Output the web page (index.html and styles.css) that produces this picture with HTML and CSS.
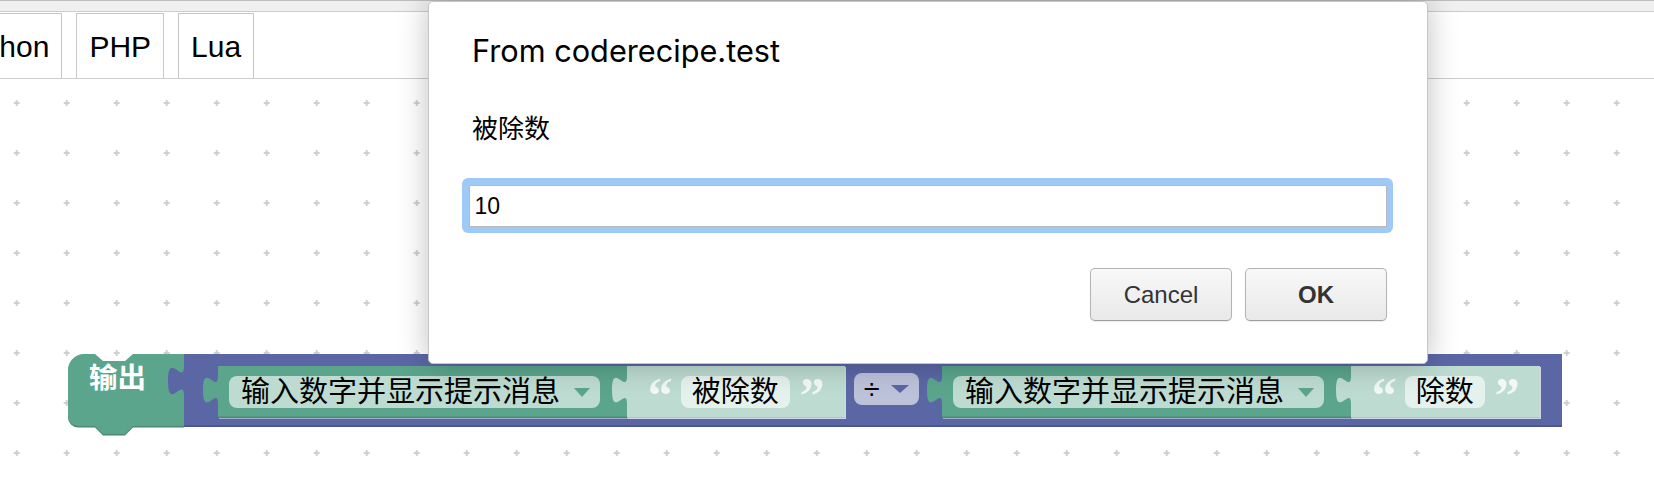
FILE: index.html
```html
<!DOCTYPE html>
<html lang="zh-CN">
<head>
<meta charset="utf-8">
<title>coderecipe.test</title>
<link rel="stylesheet" href="styles.css">
</head>
<body>
<div class="page">
  <div class="topstrip"></div>
  <nav class="tabbar">
    <div class="tabs">
      <div class="tab">Python</div>
      <div class="tab">PHP</div>
      <div class="tab">Lua</div>
    </div>
  </nav>

  <main class="workspace">
    <svg class="grid" width="100%" height="100%">
      <defs>
        <pattern id="grid-cross" x="-8.3" y="-1" width="50" height="50" patternUnits="userSpaceOnUse">
          <rect x="22" y="24.1" width="6" height="1.8" fill="#cccccc"/>
          <rect x="24.1" y="22" width="1.8" height="6" fill="#cccccc"/>
        </pattern>
      </defs>
      <rect width="100%" height="100%" fill="url(#grid-cross)"/>
    </svg>

    <div class="block-stack">
      <div class="print-block">
        <svg class="print-shape" width="116" height="84" viewBox="0 0 116 84">
          <path transform="translate(0 1.5)" fill="#4a8a74" d="M0,16 A16,16 0 0 1 16,0 H27 L35,7 H57 L65,0 H116 V72 H65 L57,80 H35 L27,72 H10 A10,10 0 0 1 0,62 Z"/>
          <path fill="#5ba58c" d="M0,16 A16,16 0 0 1 16,0 H27 L35,7 H57 L65,0 H116 V72 H65 L57,80 H35 L27,72 H10 A10,10 0 0 1 0,62 Z"/>
        </svg>
        <span class="print-label">输出</span>
      </div>

      <div class="math-block">
        <svg class="out-tab" width="16" height="32" viewBox="0 0 16 32">
          <path fill="#5b67a5" d="M16,0 c0,20 -16,-16 -16,15 s16,-5 16,15 Z"/>
        </svg>

        <svg class="puzzle-tab" width="15" height="52" viewBox="0 0 15 52">
          <path class="tab-green" d="M15,10 c0,18.7 -15,-15 -15,14 s15,-4.7 15,14 Z"/>
        </svg>
        <div class="prompt-block">
          <span class="prompt-field"><span class="field-text">输入数字并显示提示消息</span><i class="arrow arrow-green"></i></span>
          <svg class="puzzle-tab" width="15" height="52" viewBox="0 0 15 52">
            <path class="tab-light" d="M15,10 c0,18.7 -15,-15 -15,14 s15,-4.7 15,14 Z"/>
          </svg>
          <div class="text-block">
            <span class="quote">“</span>
            <span class="text-field">被除数</span>
            <span class="quote">”</span>
          </div>
        </div>

        <span class="op-field"><span class="op-text">÷</span><i class="arrow arrow-blue"></i></span>

        <svg class="puzzle-tab" width="15" height="52" viewBox="0 0 15 52">
          <path class="tab-green" d="M15,10 c0,18.7 -15,-15 -15,14 s15,-4.7 15,14 Z"/>
        </svg>
        <div class="prompt-block">
          <span class="prompt-field"><span class="field-text">输入数字并显示提示消息</span><i class="arrow arrow-green"></i></span>
          <svg class="puzzle-tab" width="15" height="52" viewBox="0 0 15 52">
            <path class="tab-light" d="M15,10 c0,18.7 -15,-15 -15,14 s15,-4.7 15,14 Z"/>
          </svg>
          <div class="text-block">
            <span class="quote">“</span>
            <span class="text-field">除数</span>
            <span class="quote">”</span>
          </div>
        </div>
      </div>
    </div>
  </main>

  <div class="dialog" role="dialog">
    <h1 class="dialog-title">From coderecipe.test</h1>
    <p class="dialog-message">被除数</p>
    <div class="input-ring">
      <input class="prompt-input" type="text" value="10">
    </div>
    <div class="dialog-buttons">
      <button class="btn">Cancel</button>
      <button class="btn btn-ok">OK</button>
    </div>
  </div>
</div>
</body>
</html>
```

FILE: styles.css
```css
html, body {
  margin: 0;
  padding: 0;
  background: #ffffff;
}

.page {
  position: relative;
  width: 1654px;
  height: 490px;
  overflow: hidden;
  font-family: "Liberation Sans", "Noto Sans CJK SC", sans-serif;
  color: #000;
}

/* ---------- top strip & tabs ---------- */
.topstrip {
  height: 10px;
  background: #f0f0f0;
  border-top: 1px solid #bebebe;
  border-bottom: 1px solid #cdcdcd;
}

.tabbar {
  padding-top: 1px;
  border-bottom: 1px solid #cdcdcd;
}

.tabs {
  display: flex;
  gap: 14px;
  margin-left: -57px;
}

.tab {
  height: 64px;
  line-height: 66px;
  padding: 0 12px;
  border: 1px solid #c8c8c8;
  border-bottom: 0;
  font-size: 30px;
  font-family: "Liberation Sans", Arial, sans-serif;
  color: #000;
}

/* ---------- workspace ---------- */
.workspace {
  position: relative;
  height: 411px;
}

.grid {
  position: absolute;
  left: 0;
  top: 0;
}

.block-stack {
  position: absolute;
  left: 68px;
  top: 275px;
  display: flex;
  align-items: flex-start;
}

.print-block {
  position: relative;
  width: 116px;
  height: 73px;
  flex: none;
}

.print-shape {
  position: absolute;
  left: 0;
  top: 0;
  overflow: visible;
}

.print-label {
  position: relative;
  display: block;
  padding: 8px 0 0 21px;
  font: bold 28.5px/28px "Noto Sans CJK SC", sans-serif;
  color: #ffffff;
}

.math-block {
  position: relative;
  display: flex;
  align-items: flex-start;
  height: 73px;
  box-sizing: border-box;
  padding: 12px 22px 0 19px;
  background: #5b67a5;
  box-shadow: inset 0 -2px 0 #4b5692;
  flex: none;
}

.out-tab {
  position: absolute;
  left: -16px;
  top: 12px;
  overflow: visible;
}

.puzzle-tab {
  display: block;
  flex: none;
  overflow: visible;
}

.tab-green { fill: #5ba58c; }
.tab-light { fill: #bddbd1; }

.prompt-block {
  display: flex;
  align-items: center;
  height: 52px;
  box-sizing: border-box;
  padding-left: 11px;
  background: #5ba58c;
  box-shadow: inset 0 -1.5px 0 #4a8a74, 1px 1px 0 rgba(255, 255, 255, 0.45);
  flex: none;
}

.prompt-field {
  display: flex;
  align-items: center;
  height: 32px;
  box-sizing: border-box;
  padding: 0 10px 0 12px;
  margin-right: 12px;
  border-radius: 8px;
  background: #bddbd1;
}

.field-text {
  display: block;
  height: 32px;
  box-sizing: border-box;
  padding-bottom: 6px;
  font: 29px/26px "Noto Sans CJK SC", sans-serif;
  color: #000;
  white-space: nowrap;
}

.arrow {
  display: block;
  width: 0;
  height: 0;
  flex: none;
}

.arrow-green {
  margin-left: 13.7px;
  border-left: 8.3px solid transparent;
  border-right: 8.3px solid transparent;
  border-top: 9px solid #5ba58c;
}

.arrow-blue {
  margin-left: 11px;
  border-left: 9px solid transparent;
  border-right: 9px solid transparent;
  border-top: 8.5px solid #5b67a5;
}

.text-block {
  display: flex;
  align-items: flex-start;
  height: 52px;
  box-sizing: border-box;
  padding: 0 23px 0 21px;
  background: #bddbd1;
  box-shadow: inset 0 -1px 0 #a9cbbf, 1px 1px 0 rgba(255, 255, 255, 0.5);
}

.quote {
  display: block;
  width: 22px;
  margin-top: 7px;
  font: bold 50px/44px "Liberation Serif", serif;
  color: rgba(255, 255, 255, 0.8);
}

.text-field {
  display: block;
  height: 32px;
  box-sizing: border-box;
  margin: 10px 10px 0 11px;
  padding: 0 11px 6px;
  border-radius: 8px;
  background: #e5f1ed;
  font: 29px/26px "Noto Sans CJK SC", sans-serif;
  color: #000;
  white-space: nowrap;
}

.op-field {
  display: flex;
  align-items: center;
  height: 32px;
  box-sizing: border-box;
  margin: 7.3px 8.3px 0 9px;
  padding: 0 10px;
  border-radius: 8px;
  background: #bdc2db;
  flex: none;
}

.op-text {
  font: 29px/32px "Liberation Sans", sans-serif;
  color: #000;
}

/* ---------- dialog ---------- */
.dialog {
  position: absolute;
  left: 428px;
  top: 1px;
  z-index: 10;
  width: 1000px;
  box-sizing: border-box;
  padding: 31px 34px 42px 33px;
  background: #ffffff;
  border: 1px solid #c6c6c6;
  border-radius: 5px;
  box-shadow: 0 0 30px rgba(0, 0, 0, 0.25);
}

.dialog-title {
  margin: 0;
  padding-left: 10px;
  font: 400 30.7px/36px Inter, "Liberation Sans", sans-serif;
  color: #000;
}

.dialog-message {
  margin: 40px 0 0;
  padding-left: 10px;
  font: 26px/36px "Noto Sans CJK SC", sans-serif;
  color: #000;
}

.input-ring {
  margin-top: 33px;
  padding: 6.5px;
  border-radius: 6px;
  background: #9fcaf7;
}

.prompt-input {
  display: block;
  width: 100%;
  height: 42px;
  box-sizing: border-box;
  margin: 0;
  padding: 2px 5px 0;
  border: 1px solid #b9b9b9;
  border-radius: 0;
  background: #ffffff;
  outline: none;
  font: 23px "Liberation Sans", sans-serif;
  color: #000;
}

.dialog-buttons {
  display: flex;
  justify-content: flex-end;
  gap: 13px;
  margin-top: 35px;
  padding-right: 6px;
}

.btn {
  width: 142px;
  height: 53px;
  margin: 0;
  padding: 0;
  border: 1px solid #b3b3b3;
  border-bottom-color: #9e9e9e;
  border-radius: 5px;
  background: linear-gradient(#f8f8f8, #e9e9e9);
  box-shadow: 0 1px 1px rgba(0, 0, 0, 0.08);
  font: 24px "Liberation Sans", sans-serif;
  color: #333333;
}

.btn-ok {
  font-weight: bold;
}
```
